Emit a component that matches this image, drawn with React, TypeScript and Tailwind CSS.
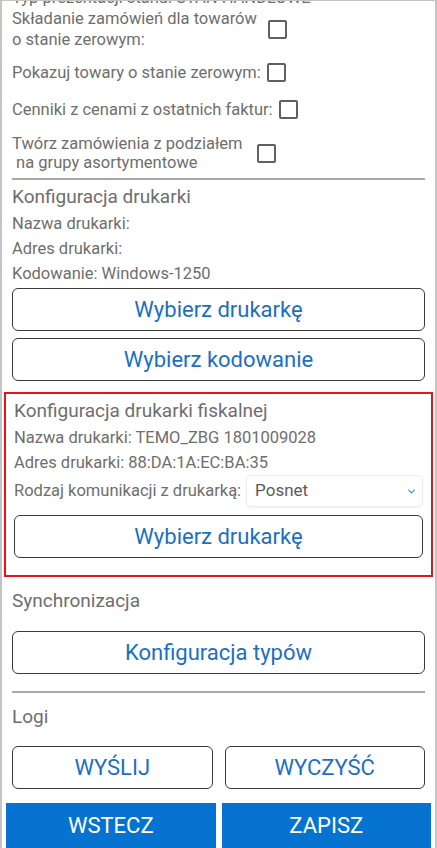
import { ChevronDown } from 'lucide-react';

const font = { fontFamily: 'Roboto, "Noto Sans", sans-serif' };

function Check() {
  return <span className="inline-block h-[19px] w-[19px] shrink-0 rounded-[2px] border-2 border-[#606060]" />;
}

function OutlineBtn({ children, className = '' }: { children: React.ReactNode; className?: string }) {
  return (
    <button
      className={`flex h-[43px] w-full items-center justify-center rounded-[6px] border border-[#3a3a3a] bg-white text-[22px] text-[#1b6fc2] ${className}`}
    >
      {children}
    </button>
  );
}

function Line({ children }: { children: React.ReactNode }) {
  return <div className="text-[16.5px] leading-[25px] text-[#6e6e6e]">{children}</div>;
}

export default function App() {
  return (
    <div className="h-[848px] w-[437px] overflow-hidden bg-white" style={font}>
      <div className="flex h-full flex-col border-x-2 border-t border-[#c4c4c4]">
        <div className="flex-1 overflow-hidden px-[10px] text-[#6e6e6e]">
          <div className="-mt-[13px] h-[19px] text-[16.5px] leading-[19px]">Typ prezentacji stanu: STAN HANDLOWE</div>

          <div className="mt-[1px] flex items-center gap-[11px] text-[16.5px] leading-[21px]">
            <div>
              Składanie zamówień dla towarów
              <br />o stanie zerowym:
            </div>
            <Check />
          </div>
          <div className="mt-[12px] flex items-center gap-[6px] text-[16.5px] leading-[21px]">
            <div>Pokazuj towary o stanie zerowym:</div>
            <Check />
          </div>
          <div className="mt-[16px] flex items-center gap-[6px] text-[16.5px] leading-[21px]">
            <div>Cenniki z cenami z ostatnich faktur:</div>
            <Check />
          </div>
          <div className="mt-[14px] flex items-center gap-[14px] text-[16.5px] leading-[19px]">
            <div>
              Twórz zamówienia z podziałem
              <br />
              &nbsp;na grupy asortymentowe
            </div>
            <Check />
          </div>

          <div className="mt-[6px] border-t-2 border-[#a8a8a8]" />

          <div className="mt-[3px] text-[19px] leading-[28px]">Konfiguracja drukarki</div>
          <Line>Nazwa drukarki:</Line>
          <Line>Adres drukarki:</Line>
          <Line>Kodowanie: Windows-1250</Line>
          <OutlineBtn className="mt-[2px]">Wybierz drukarkę</OutlineBtn>
          <OutlineBtn className="mt-[7px]">Wybierz kodowanie</OutlineBtn>

          <div className="-mx-[8px] mt-[11px] border-2 border-[#e8141c] px-[8px] pb-[17px] pt-[3px]">
            <div className="text-[19px] leading-[28px]">Konfiguracja drukarki fiskalnej</div>
            <div className="text-[16.5px] leading-[26px]">Nazwa drukarki: TEMO_ZBG 1801009028</div>
            <div className="text-[16.5px] leading-[24px]">Adres drukarki: 88:DA:1A:EC:BA:35</div>
            <div className="flex items-center gap-[5px]">
              <span className="text-[16.5px]">Rodzaj komunikacji z drukarką:</span>
              <div className="flex h-[32px] flex-1 items-center justify-between rounded-[5px] border border-[#ececec] pl-[8px] pr-[5px] text-[17px] text-[#5a5a5a] shadow-[0_1px_2px_rgba(0,0,0,0.06)]">
                <span>Posnet</span>
                <ChevronDown size={11} strokeWidth={2.5} className="text-[#3b8fd6]" />
              </div>
            </div>
            <OutlineBtn className="mt-[8px]">Wybierz drukarkę</OutlineBtn>
          </div>

          <div className="mt-[11px] text-[19px] leading-[26px]">Synchronizacja</div>
          <OutlineBtn className="mt-[17px]">Konfiguracja typów</OutlineBtn>

          <div className="mt-[17px] border-t-2 border-[#a8a8a8]" />
          <div className="mt-[11px] text-[19px] leading-[26px]">Logi</div>

          <div className="mt-[16px] grid grid-cols-2 gap-[12px]">
            <OutlineBtn>WYŚLIJ</OutlineBtn>
            <OutlineBtn>WYCZYŚĆ</OutlineBtn>
          </div>
        </div>

        <div className="grid h-[45px] grid-cols-2 gap-[6px] px-[4px]">
          <button className="bg-[#0673d1] text-[22px] text-white">WSTECZ</button>
          <button className="bg-[#0673d1] text-[22px] text-white">ZAPISZ</button>
        </div>
      </div>
    </div>
  );
}
